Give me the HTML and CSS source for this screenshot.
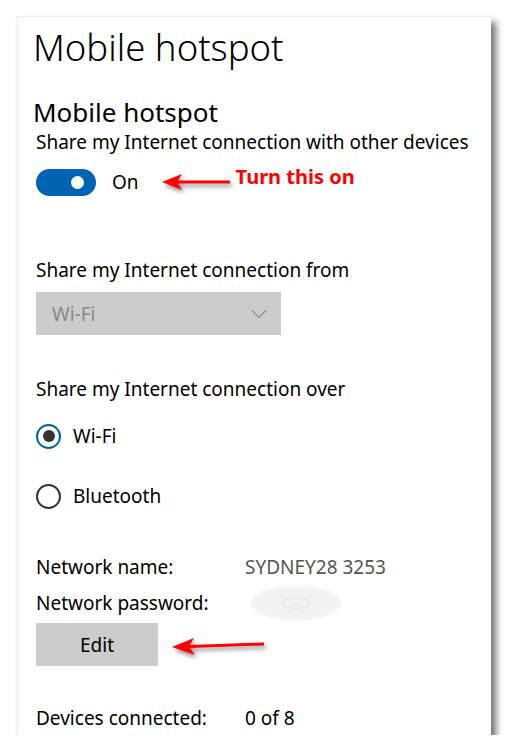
FILE: index.html
```html
<!DOCTYPE html>
<html lang="en">
<head>
    <meta charset="UTF-8">
    <meta name="viewport" content="width=device-width, initial-scale=1.0">
    <title>Mobile hotspot</title>
    <link rel="stylesheet" href="styles.css">
</head>
<body>
    <div class="card">
        <h1>Mobile hotspot</h1>

        <h2>Mobile hotspot</h2>
        <p class="label">Share my Internet connection with other devices</p>
        <div class="toggle-row">
            <span class="toggle"><span class="knob"></span></span>
            <span class="state">On</span>
            <svg class="arrow" width="76" height="22" viewBox="0 0 76 22">
                <defs>
                    <filter id="sh1" x="-20%" y="-50%" width="140%" height="220%">
                        <feDropShadow dx="2" dy="3" stdDeviation="2" flood-color="#000" flood-opacity="0.45"/>
                    </filter>
                </defs>
                <g filter="url(#sh1)">
                    <path d="M2 10 L22 2 L18 8.5 L70 8.5 L70 11.5 L18 11.5 L22 18 Z" fill="#f00"/>
                </g>
            </svg>
            <span class="note">Turn this on</span>
        </div>

        <p class="label from">Share my Internet connection from</p>
        <div class="select">
            <span>Wi-Fi</span>
            <svg width="16" height="10" viewBox="0 0 16 10"><path d="M1 1.5 L8 8.5 L15 1.5" fill="none" stroke="#8a8a8a" stroke-width="1.2"/></svg>
        </div>

        <p class="label over">Share my Internet connection over</p>
        <div class="radio checked"><span class="dot"></span>Wi-Fi</div>
        <div class="radio"><span class="dot"></span>Bluetooth</div>

        <div class="info first"><span class="key">Network name:</span><span class="val">SYDNEY28 3253</span></div>
        <div class="info"><span class="key">Network password:</span><span class="blur"><span class="blur-in"></span></span></div>
        <div class="edit-row">
            <button class="btn">Edit</button>
            <svg class="arrow" width="100" height="30" viewBox="0 0 100 30">
                <defs>
                    <filter id="sh2" x="-20%" y="-50%" width="140%" height="220%">
                        <feDropShadow dx="2" dy="3" stdDeviation="2" flood-color="#000" flood-opacity="0.45"/>
                    </filter>
                </defs>
                <g filter="url(#sh2)">
                    <path d="M2 17 L24 8 L20 15 L94 12.5 L94 15.5 L20 18 L25 25 Z" fill="#f00"/>
                </g>
            </svg>
        </div>

        <div class="info devices"><span class="key">Devices connected:</span><span class="val dark">0 of 8</span></div>
    </div>
</body>
</html>
```

FILE: styles.css
```css
body {
    margin: 0;
    background: #fff;
    font-family: "Noto Sans", "Open Sans", sans-serif;
    color: #000;
}
.card {
    margin: 16px 0 0 17px;
    width: 474px;
    height: 719px;
    padding: 0 0 0 15px;
    box-sizing: border-box;
    background: #fff;
    border-top: 1px solid #ededed;
    border-left: 1px solid #ededed;
    box-shadow: 5px 6px 7px rgba(0, 0, 0, 0.55);
}
h1 {
    margin: 0;
    padding-top: 7px;
    font-size: 36.5px;
    font-weight: 300;
    line-height: 46px;
}
h2 {
    margin: 0;
    margin-top: 27px;
    font-size: 26px;
    font-weight: 400;
    line-height: 30px;
}
.label {
    margin: 0;
    margin-left: 3px;
    font-size: 19px;
    line-height: 26px;
}
h2 + .label {
    margin-top: 2px;
}
.toggle-row {
    display: flex;
    align-items: center;
    margin: 13px 0 0 3px;
    height: 28px;
}
.toggle {
    width: 60px;
    height: 27px;
    border-radius: 14px;
    background: #0063b1;
    position: relative;
}
.knob {
    position: absolute;
    right: 12px;
    top: 7px;
    width: 13px;
    height: 13px;
    border-radius: 50%;
    background: #fff;
}
.state {
    margin-left: 16px;
    font-size: 19px;
}
.toggle-row .arrow {
    margin-left: 21px;
    margin-top: 2px;
}
.note {
    margin-top: -12px;
    color: #f00;
    font-weight: 700;
    font-size: 20px;
}
.from {
    margin-top: 61px;
}
.select {
    display: flex;
    align-items: center;
    justify-content: space-between;
    margin: 9px 0 0 3px;
    width: 245px;
    height: 43px;
    padding: 0 14px 0 16px;
    box-sizing: border-box;
    background: #ccc;
    color: #888;
    font-size: 19px;
}
.over {
    margin-top: 41px;
}
.radio {
    display: flex;
    align-items: center;
    margin: 19px 0 0 3px;
    height: 30px;
    font-size: 19px;
}
.radio + .radio {
    margin-top: 30px;
}
.dot {
    width: 21px;
    height: 21px;
    margin-right: 12px;
    border: 2.5px solid #333;
    border-radius: 50%;
    position: relative;
}
.checked .dot {
    border-color: #0063b1;
}
.checked .dot::after {
    content: "";
    position: absolute;
    left: 4.5px;
    top: 4.5px;
    width: 12px;
    height: 12px;
    border-radius: 50%;
    background: #333;
}
.info {
    display: flex;
    align-items: center;
    margin-left: 3px;
    height: 36px;
    font-size: 19px;
}
.info.first {
    margin-top: 38px;
}
.key {
    width: 209px;
}
.val {
    color: #555;
}
.val.dark {
    color: #000;
}
.blur {
    width: 92px;
    height: 36px;
    border-radius: 50%;
    background: radial-gradient(ellipse at center, #f2f2f2 55%, #fbfbfb 80%, #fff 100%);
    display: flex;
    align-items: center;
    justify-content: center;
    margin-left: 5px;
}
.blur-in {
    width: 26px;
    height: 10px;
    border-radius: 50%;
    border: 1px solid #e3e3e3;
}
.edit-row {
    display: flex;
    align-items: center;
    margin: 2px 0 0 3px;
}
.btn {
    width: 122px;
    height: 43px;
    border: none;
    background: #ccc;
    font-family: inherit;
    font-size: 19px;
    color: #000;
}
.edit-row .arrow {
    margin-left: 12px;
}
.devices {
    margin-top: 34px;
}
```
